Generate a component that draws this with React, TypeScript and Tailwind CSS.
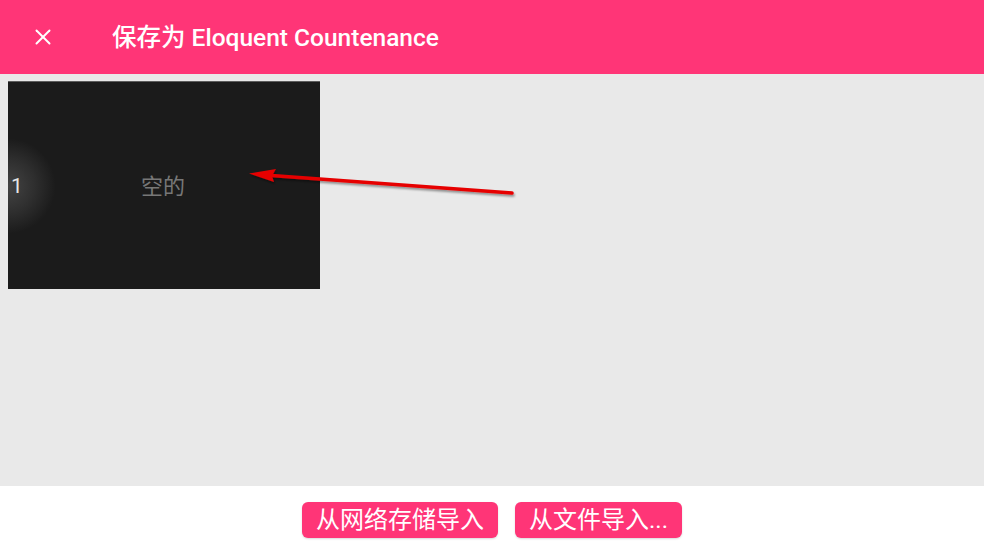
import { X } from "lucide-react";

const font = { fontFamily: '"Roboto", "Noto Sans CJK SC", sans-serif' };

const Arrow = () => (
  <svg
    className="absolute left-0 top-0 pointer-events-none"
    width="984"
    height="554"
    viewBox="0 0 984 554"
  >
    <defs>
      <filter id="sh" x="-10%" y="-50%" width="120%" height="200%">
        <feDropShadow dx="1" dy="2" stdDeviation="1.2" floodColor="#000" floodOpacity="0.4" />
      </filter>
    </defs>
    <g filter="url(#sh)">
      <line x1="512" y1="193" x2="268" y2="175.2" stroke="#e60000" strokeWidth="3.5" strokeLinecap="round" />
      <path d="M249 173.6 L276 169 L272 176 L274 182 Z" fill="#e60000" />
    </g>
  </svg>
);

export default function App() {
  return (
    <div className="relative w-[984px] h-[554px] flex flex-col overflow-hidden bg-[#e9e9e9]" style={font}>
      <header className="h-[74px] shrink-0 bg-[#ff3577] flex items-center text-white">
        <div className="w-[86px] flex justify-center">
          <X size={26} strokeWidth={1.8} />
        </div>
        <h1 className="ml-[26px] mt-[2px] text-[24.5px] font-medium">保存为 Eloquent Countenance</h1>
      </header>

      <main className="flex-1 px-2 pt-[7px]">
        <div className="relative w-[312px] h-[208px] bg-[#1b1b1b] border-t border-[#8a8a8a]/60 flex items-center justify-center overflow-hidden">
          <div className="absolute left-[-48px] top-[56px] w-[96px] h-[96px] rounded-full bg-[radial-gradient(circle,#444444_0%,#2e2e2e_40%,#1b1b1b_70%)]" />
          <span className="absolute left-[3px] top-[94px] text-[21px] text-[#e6e6e6] leading-none">1</span>
          <span className="text-[22px] text-[#777777] mt-[2px] mr-[2px]">空的</span>
        </div>
      </main>

      <footer className="h-[68px] shrink-0 bg-white flex items-center justify-center gap-[17px]">
        <button className="h-[36px] px-[14px] rounded-[6px] bg-[#ff3577] text-white text-[24px] leading-none shadow-[0_1px_2px_rgba(0,0,0,0.15)]">
          从网络存储导入
        </button>
        <button className="h-[36px] px-[14px] rounded-[6px] bg-[#ff3577] text-white text-[24px] leading-none shadow-[0_1px_2px_rgba(0,0,0,0.15)]">
          从文件导入...
        </button>
      </footer>

      <Arrow />
    </div>
  );
}
